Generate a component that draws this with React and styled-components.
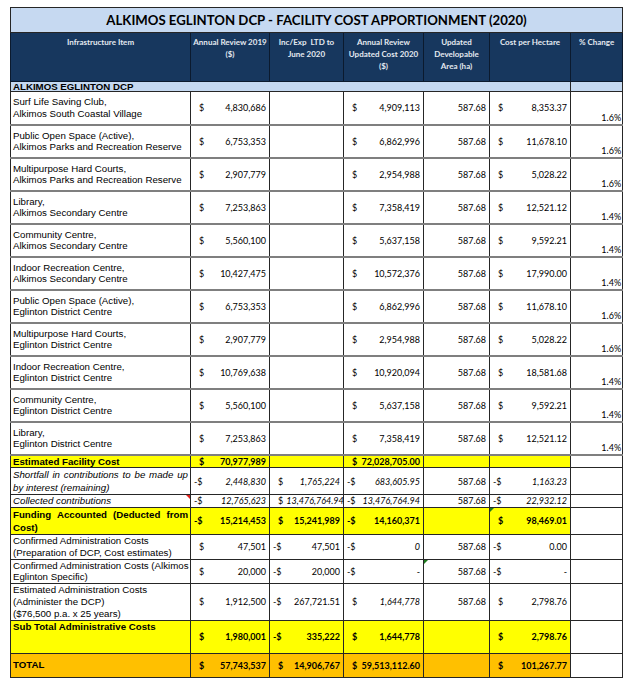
import React from 'react'
import styled, { createGlobalStyle, css } from 'styled-components'

const GlobalStyle = createGlobalStyle`
  body {
    margin: 0;
    background: #ffffff;
  }
`

const Page = styled.div`
  padding: 7px 0 0 10px;
`

const Sheet = styled.table`
  border-collapse: collapse;
  table-layout: fixed;
  width: 612px;
  border: 1px solid #262626;
`

const TitleCell = styled.th`
  height: 24px;
  padding: 0;
  background: #c6d9f1;
  border: 1px solid #262626;
  font-family: Lato, "Liberation Sans", sans-serif;
  font-weight: 700;
  font-size: 13.2px;
  color: #000;
  text-align: center;
  vertical-align: middle;
`

const HeadCell = styled.th`
  height: 45px;
  padding: 3px 2px 0;
  background: #17375e;
  border: 1px solid #0b1a2e;
  font-family: Lato, "Liberation Sans", sans-serif;
  font-weight: 700;
  font-size: 8px;
  line-height: 12px;
  color: #e4e9f0;
  text-align: center;
  vertical-align: top;
`

const SectionCell = styled.td`
  height: 9px;
  padding: 0 2px;
  background: #c5d9f1;
  border: 1px solid #262626;
  font-family: "Liberation Sans", Arial, sans-serif;
  font-weight: 700;
  font-size: 9.7px;
  line-height: 9px;
`

const fills = {
  yellow: '#ffff00',
  orange: '#ffc000',
}

const Row = styled.tr`
  height: ${(p) => p.$h}px;
  & > td {
    background: ${(p) => fills[p.$fill] || '#ffffff'};
    border-left: 1px solid #262626;
    border-right: 1px solid #262626;
    border-bottom: ${(p) => (p.$grid ? '2px solid #7f7f7f' : '1px solid #262626')};
  }
`

const LabelCell = styled.td`
  position: relative;
  padding: 0 2px 0 2px;
  font-family: "Liberation Sans", Arial, sans-serif;
  font-size: 9.7px;
  line-height: ${(p) => p.$lh || 11.5}px;
  color: #000;
  white-space: ${(p) => (p.$nowrap ? 'nowrap' : 'normal')};
  font-weight: ${(p) => (p.$bold ? 700 : 400)};
  font-style: ${(p) => (p.$italic ? 'italic' : 'normal')};
  text-align: ${(p) => (p.$justify ? 'justify' : 'left')};
  text-align-last: left;
  vertical-align: ${(p) => (p.$top ? 'top' : 'middle')};
`

const NumCell = styled.td`
  position: relative;
  padding: 0;
  vertical-align: middle;
  font-family: Lato, "Liberation Sans", sans-serif;
  font-size: 9px;
  color: #000;
  white-space: nowrap;
`

const PctCell = styled.td`
  padding: 0 1px 1px 0;
  background: #ffffff !important;
  vertical-align: bottom;
  text-align: right;
  font-family: Lato, "Liberation Sans", sans-serif;
  font-size: 9px;
  line-height: 11px;
  color: #000;
`

const MoneyBox = styled.div`
  display: flex;
  justify-content: space-between;
  align-items: center;
  gap: 3px;
  padding: 0 3px 0 ${(p) => (p.$neg ? 3 : 8)}px;
  font-weight: ${(p) => (p.$bold ? 700 : 400)};
  font-style: ${(p) => (p.$italic ? 'italic' : 'normal')};
`

const Sign = styled.span`
  font-style: normal;
`

const Plain = styled.div`
  text-align: right;
  padding-right: 3px;
`

const Marker = styled.span`
  position: absolute;
  top: 0;
  ${(p) => (p.$side === 'right' ? 'right: 0;' : 'left: 0;')}
  width: 0;
  height: 0;
  border-top: 4px solid ${(p) => p.$color};
  ${(p) =>
    p.$side === 'right'
      ? css`border-left: 4px solid transparent;`
      : css`border-right: 4px solid transparent;`}
`

function Money({ v, bold, italic }) {
  if (!v) return null
  const neg = v.startsWith('-')
  const value = v.replace(/^-?\$\s*/, '')
  return (
    <MoneyBox $neg={neg} $bold={bold} $italic={italic}>
      <Sign>{neg ? '-$' : '$'}</Sign>
      <span>{value}</span>
    </MoneyBox>
  )
}

const facilities = [
  ['Surf Life Saving Club,', 'Alkimos South Coastal Village', '4,830,686', '4,909,113', '8,353.37', '1.6%'],
  ['Public Open Space (Active),', 'Alkimos Parks and Recreation Reserve', '6,753,353', '6,862,996', '11,678.10', '1.6%'],
  ['Multipurpose Hard Courts,', 'Alkimos Parks and Recreation Reserve', '2,907,779', '2,954,988', '5,028.22', '1.6%'],
  ['Library,', 'Alkimos Secondary Centre', '7,253,863', '7,358,419', '12,521.12', '1.4%'],
  ['Community Centre,', 'Alkimos Secondary Centre', '5,560,100', '5,637,158', '9,592.21', '1.4%'],
  ['Indoor Recreation Centre,', 'Alkimos Secondary Centre', '10,427,475', '10,572,376', '17,990.00', '1.4%'],
  ['Public Open Space (Active),', 'Eglinton District Centre', '6,753,353', '6,862,996', '11,678.10', '1.6%'],
  ['Multipurpose Hard Courts,', 'Eglinton District Centre', '2,907,779', '2,954,988', '5,028.22', '1.6%'],
  ['Indoor Recreation Centre,', 'Eglinton District Centre', '10,769,638', '10,920,094', '18,581.68', '1.4%'],
  ['Community Centre,', 'Eglinton District Centre', '5,560,100', '5,637,158', '9,592.21', '1.4%'],
  ['Library,', 'Eglinton District Centre', '7,253,863', '7,358,419', '12,521.12', '1.4%'],
]

const AREA = '587.68'

export default function App() {
  return (
    <Page>
      <GlobalStyle />
      <Sheet>
        <colgroup>
          <col style={{ width: 180 }} />
          <col style={{ width: 79 }} />
          <col style={{ width: 74 }} />
          <col style={{ width: 80 }} />
          <col style={{ width: 66 }} />
          <col style={{ width: 81 }} />
          <col style={{ width: 52 }} />
        </colgroup>
        <thead>
          <tr>
            <TitleCell colSpan={7}>ALKIMOS EGLINTON DCP - FACILITY COST APPORTIONMENT (2020)</TitleCell>
          </tr>
          <tr>
            <HeadCell>Infrastructure Item</HeadCell>
            <HeadCell>Annual Review 2019<br />($)</HeadCell>
            <HeadCell>Inc/Exp&nbsp; LTD to<br />June 2020</HeadCell>
            <HeadCell>Annual Review<br />Updated Cost 2020<br />($)</HeadCell>
            <HeadCell>Updated<br />Developable<br />Area (ha)</HeadCell>
            <HeadCell>Cost per Hectare</HeadCell>
            <HeadCell>% Change</HeadCell>
          </tr>
        </thead>
        <tbody>
          <tr>
            <SectionCell colSpan={6}>ALKIMOS EGLINTON DCP</SectionCell>
            <SectionCell />
          </tr>
          {facilities.map(([name, place, y2019, y2020, perHa, pct], i) => (
            <Row key={i} $h={33} $grid>
              <LabelCell>
                {name}
                <br />
                {place}
              </LabelCell>
              <NumCell><Money v={y2019} /></NumCell>
              <NumCell />
              <NumCell><Money v={y2020} /></NumCell>
              <NumCell><Plain>{AREA}</Plain></NumCell>
              <NumCell><Money v={perHa} /></NumCell>
              <PctCell>{pct}</PctCell>
            </Row>
          ))}

          <Row $h={13} $fill="yellow">
            <LabelCell $bold>Estimated Facility Cost</LabelCell>
            <NumCell><Money v="70,977,989" bold /></NumCell>
            <NumCell />
            <NumCell><Money v="72,028,705.00" bold /></NumCell>
            <NumCell />
            <NumCell />
            <PctCell />
          </Row>

          <Row $h={25}>
            <LabelCell $italic $justify $lh={13}>
              Shortfall in contributions to be made up by interest (remaining)
            </LabelCell>
            <NumCell><Money v="-$2,448,830" italic /></NumCell>
            <NumCell><Money v="1,765,224" italic /></NumCell>
            <NumCell><Money v="-$683,605.95" italic /></NumCell>
            <NumCell><Plain>{AREA}</Plain></NumCell>
            <NumCell><Money v="-$1,163.23" italic /></NumCell>
            <PctCell />
          </Row>

          <Row $h={12}>
            <LabelCell $italic>
              Collected contributions
              <Marker $side="right" $color="#e0201b" />
            </LabelCell>
            <NumCell><Money v="-$12,765,623" italic /></NumCell>
            <NumCell><Money v="13,476,764.94" italic /></NumCell>
            <NumCell><Money v="-$13,476,764.94" italic /></NumCell>
            <NumCell><Plain>{AREA}</Plain></NumCell>
            <NumCell><Money v="-$22,932.12" italic /></NumCell>
            <PctCell />
          </Row>

          <Row $h={26} $fill="yellow">
            <LabelCell $bold $justify $lh={13}>
              Funding Accounted (Deducted from Cost)
            </LabelCell>
            <NumCell><Money v="-$15,214,453" bold /></NumCell>
            <NumCell><Money v="15,241,989" bold /></NumCell>
            <NumCell><Money v="-$14,160,371" bold /></NumCell>
            <NumCell />
            <NumCell>
              <Marker $color="#1e7a1e" />
              <Money v="98,469.01" bold />
            </NumCell>
            <PctCell />
          </Row>

          <Row $h={25}>
            <LabelCell $lh={11.5}>
              Confirmed Administration Costs
              <br />
              (Preparation of DCP, Cost estimates)
            </LabelCell>
            <NumCell><Money v="47,501" /></NumCell>
            <NumCell><Money v="-$47,501" /></NumCell>
            <NumCell><Money v="-$0" italic /></NumCell>
            <NumCell><Plain>{AREA}</Plain></NumCell>
            <NumCell><Money v="-$0.00" /></NumCell>
            <PctCell />
          </Row>

          <Row $h={24}>
            <LabelCell $lh={11.5} $nowrap>
              Confirmed Administration Costs (Alkimos
              <br />
              Eglinton Specific)
            </LabelCell>
            <NumCell><Money v="20,000" /></NumCell>
            <NumCell><Money v="-$20,000" /></NumCell>
            <NumCell><Money v="-" /></NumCell>
            <NumCell>
              <Marker $color="#1e7a1e" />
              <Plain>{AREA}</Plain>
            </NumCell>
            <NumCell><Money v="-" /></NumCell>
            <PctCell />
          </Row>

          <Row $h={36}>
            <LabelCell $lh={12}>
              Estimated Administration Costs
              <br />
              (Administer the DCP)
              <br />
              ($76,500 p.a. x 25 years)
            </LabelCell>
            <NumCell><Money v="1,912,500" /></NumCell>
            <NumCell><Money v="-$267,721.51" /></NumCell>
            <NumCell><Money v="1,644,778" italic /></NumCell>
            <NumCell><Plain>{AREA}</Plain></NumCell>
            <NumCell><Money v="2,798.76" /></NumCell>
            <PctCell />
          </Row>

          <Row $h={33} $fill="yellow">
            <LabelCell $bold $top>Sub Total Administrative Costs</LabelCell>
            <NumCell><Money v="1,980,001" bold /></NumCell>
            <NumCell><Money v="-$335,222" bold /></NumCell>
            <NumCell><Money v="1,644,778" bold /></NumCell>
            <NumCell />
            <NumCell><Money v="2,798.76" bold /></NumCell>
            <PctCell />
          </Row>

          <Row $h={24} $fill="orange">
            <LabelCell $bold>TOTAL</LabelCell>
            <NumCell><Money v="57,743,537" bold /></NumCell>
            <NumCell><Money v="14,906,767" bold /></NumCell>
            <NumCell><Money v="59,513,112.60" bold /></NumCell>
            <NumCell />
            <NumCell><Money v="101,267.77" bold /></NumCell>
            <PctCell />
          </Row>
        </tbody>
      </Sheet>
    </Page>
  )
}
